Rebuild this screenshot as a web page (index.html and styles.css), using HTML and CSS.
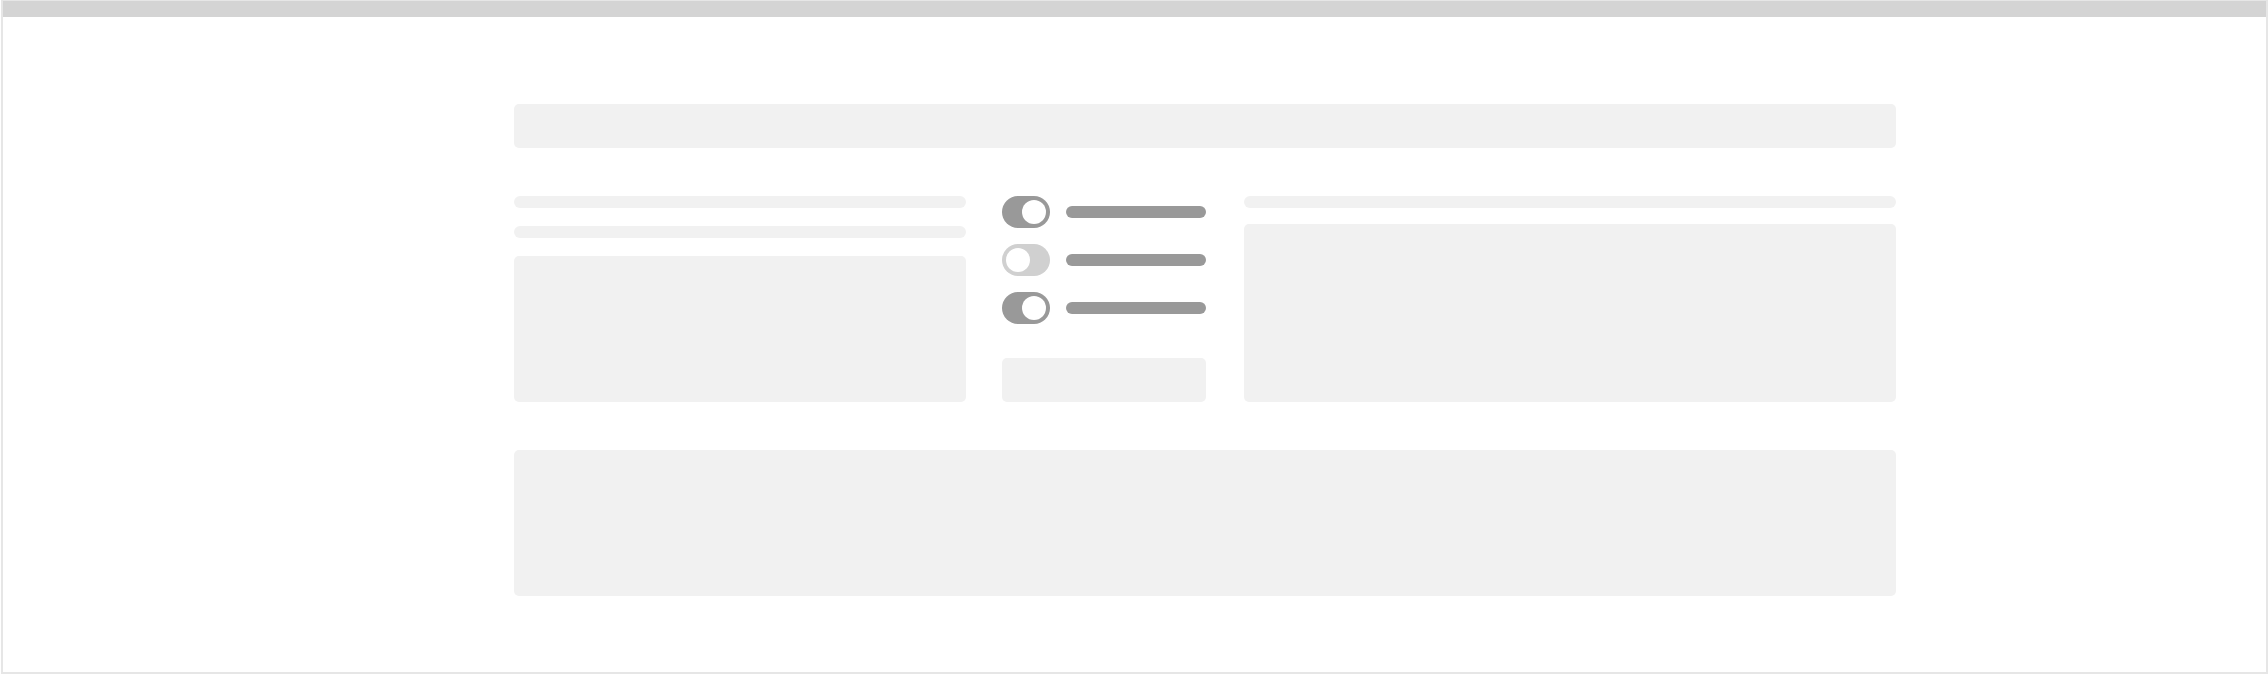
FILE: index.html
```html
<!DOCTYPE html>
<html lang="en">
<head>
    <meta charset="UTF-8">
    <meta name="viewport" content="width=device-width, initial-scale=1.0">
    <title>Settings Wireframe</title>
    <link rel="stylesheet" href="styles.css">
</head>
<body>
    <!-- Window frame -->
    <div class="window">
        <div class="titlebar"></div>

        <main class="content">
            <div class="header-block"></div>

            <section class="columns">
                <!-- Left -->
                <div class="col col-left">
                    <div class="line"></div>
                    <div class="line"></div>
                    <div class="block"></div>
                </div>

                <!-- Middle: toggles -->
                <div class="col col-mid">
                    <div class="toggle-row">
                        <span class="toggle on"><span class="knob"></span></span>
                        <span class="label-bar"></span>
                    </div>
                    <div class="toggle-row">
                        <span class="toggle"><span class="knob"></span></span>
                        <span class="label-bar"></span>
                    </div>
                    <div class="toggle-row">
                        <span class="toggle on"><span class="knob"></span></span>
                        <span class="label-bar"></span>
                    </div>
                    <div class="button-block"></div>
                </div>

                <!-- Right -->
                <div class="col col-right">
                    <div class="line"></div>
                    <div class="block"></div>
                </div>
            </section>

            <div class="footer-block"></div>
        </main>
    </div>
</body>
</html>
```

FILE: styles.css
```css
html, body {
    margin: 0;
    padding: 0;
    background: #fff;
    font-family: "Liberation Sans", Arial, sans-serif;
}
.window {
    box-sizing: border-box;
    width: 2267px;
    height: 674px;
    margin-left: 1px;
    border: 2px solid #e6e6e6;
    border-top: 1px solid #e6e6e6;
    overflow: hidden;
}
.titlebar {
    height: 16px;
    margin: 0 -2px;
    background-color: #d4d4d4;
}
.content {
    width: 1382px;
    padding: 87px 0 0 511px;
    display: flex;
    flex-direction: column;
    gap: 48px;
}
.header-block {
    height: 44px;
    background-color: #f1f1f1;
    border-radius: 5px;
}
.columns {
    display: flex;
    height: 206px;
}
.col {
    display: flex;
    flex-direction: column;
}
.col-left {
    width: 452px;
    gap: 18px;
}
.col-mid {
    width: 204px;
    margin-left: 36px;
    gap: 16px;
}
.col-right {
    flex: 1;
    margin-left: 38px;
    gap: 16px;
}
.line {
    height: 12px;
    background-color: #f1f1f1;
    border-radius: 6px;
}
.block {
    flex: 1;
    background-color: #f1f1f1;
    border-radius: 5px;
}
.toggle-row {
    display: flex;
    align-items: center;
    gap: 16px;
}
.toggle {
    box-sizing: border-box;
    display: flex;
    width: 48px;
    height: 32px;
    padding: 4px;
    border-radius: 16px;
    background-color: #d0d0d0;
}
.toggle.on {
    background-color: #999;
    justify-content: flex-end;
}
.knob {
    width: 24px;
    height: 24px;
    border-radius: 50%;
    background-color: #fff;
}
.label-bar {
    width: 140px;
    height: 12px;
    border-radius: 6px;
    background-color: #999;
}
.button-block {
    height: 44px;
    margin-top: auto;
    background-color: #f1f1f1;
    border-radius: 5px;
}
.footer-block {
    height: 146px;
    background-color: #f1f1f1;
    border-radius: 5px;
}
```
